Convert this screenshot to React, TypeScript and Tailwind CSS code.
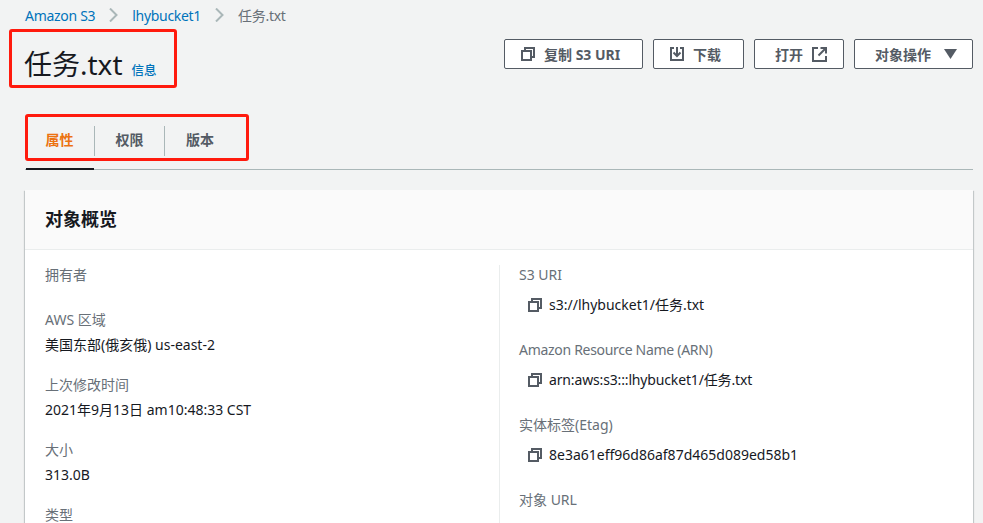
const FONT = "font-['Noto_Sans','Noto_Sans_CJK_SC',sans-serif]";

function CopyIcon({ className = "" }: { className?: string }) {
  return (
    <svg viewBox="0 0 14 14" className={className} fill="none" stroke="currentColor" strokeWidth="2">
      <rect x="1" y="4" width="9" height="9" />
      <path d="M4 4V1h9v9h-3" />
    </svg>
  );
}

function DownloadIcon() {
  return (
    <svg viewBox="0 0 14 14" className="w-[14px] h-[14px]" fill="none" stroke="currentColor" strokeWidth="2">
      <path d="M4 1H1v12h12V1h-3" />
      <path d="M7 0v8" />
      <path d="M3.500 5.500 7 9l3.500-3.500" />
    </svg>
  );
}

function ExternalIcon() {
  return (
    <svg viewBox="0 0 15 15" className="w-[15px] h-[15px]" fill="none" stroke="currentColor" strokeWidth="2">
      <path d="M6 1H1v13h13V9" />
      <path d="M8.500 1H14v5.500" />
      <path d="M14 1 6.500 8.500" />
    </svg>
  );
}

function Chevron() {
  return (
    <svg viewBox="0 0 9 14" className="w-[9px] h-[14px] text-[#aab7b8]" fill="none" stroke="currentColor" strokeWidth="2">
      <path d="M1 0.500l6.500 6.500L1 13.500" />
    </svg>
  );
}

function Button({ width, children }: { width: string; children: React.ReactNode }) {
  return (
    <button className={`${width} h-[30px] flex items-center gap-[9px] bg-white border border-[#545b64] rounded-[2px] text-[14px] font-bold text-[#545b64]`}>
      {children}
    </button>
  );
}

function Field({ label, value }: { label: string; value?: string }) {
  return (
    <div className="mb-[20px]">
      <div className="h-[20px] leading-[20px] text-[#687078]">{label}</div>
      {value ? <div className="mt-[5px] h-[20px] leading-[20px] text-[#16191f]">{value}</div> : <div className="h-[5px]" />}
    </div>
  );
}

function CopyField({ label, value, tight }: { label: string; value?: string; tight?: boolean }) {
  return (
    <div className="mb-[25px]">
      <div className={`h-[20px] leading-[20px] text-[#687078] ${tight ? "tracking-[-0.3px]" : ""}`}>{label}</div>
      {value && (
        <div className="mt-[10px] h-[20px] flex items-center pl-[9px] gap-[7px] text-[#16191f]">
          <CopyIcon className="w-[14px] h-[14px] text-[#545b64]" />
          <span className={`leading-[20px] ${tight ? "tracking-[-0.15px]" : ""}`}>{value}</span>
        </div>
      )}
    </div>
  );
}

export default function App() {
  return (
    <div className={`${FONT} relative w-[983px] h-[523px] overflow-hidden bg-[#f2f3f3] text-[14px]`}>
      <div className="pl-[25px] pr-[10px]">
        {/* breadcrumb */}
        <div className="h-[30px] flex items-center gap-[14px] text-[14px] tracking-[-0.3px]">
          <span className="text-[#0073bb]">Amazon S3</span>
          <Chevron />
          <span className="text-[#0073bb]">lhybucket1</span>
          <Chevron />
          <span className="text-[#687078]">任务.txt</span>
        </div>

        {/* header */}
        <div className="h-[56px] flex items-center justify-between">
          <div className="flex items-baseline gap-[9px] pt-[12px] -ml-[1px]">
            <span className="text-[28px] text-[#16191f] leading-[40px]">任务.txt</span>
            <span className="text-[12.5px] font-medium text-[#0073bb]">信息</span>
          </div>
          <div className="flex gap-[10px] -mt-[8px]">
            <Button width="w-[139px] pl-[16px]">
              <CopyIcon className="w-[14px] h-[14px]" />
              复制 S3 URI
            </Button>
            <Button width="w-[91px] pl-[16px]">
              <DownloadIcon />
              下载
            </Button>
            <Button width="w-[90px] pl-[20px]">
              打开
              <ExternalIcon />
            </Button>
            <Button width="w-[119px] pl-[20px]">
              对象操作
              <svg viewBox="0 0 13 10" className="w-[13px] h-[10px] ml-[4px] fill-current">
                <path d="M0 0h13L6.500 10z" />
              </svg>
            </Button>
          </div>
        </div>

        {/* tabs */}
        <div className="mt-[30px] h-[54px] pb-[4px] flex items-center border-b border-[#aab7b8] font-bold text-[14px] text-[#545b64] relative">
          <div className="w-[70px] h-[30px] pb-[2px] flex items-center justify-center text-[#ec7211] border-r border-[#aab7b8]">属性</div>
          <div className="w-[70px] h-[30px] pb-[2px] flex items-center justify-center border-r border-[#aab7b8]">权限</div>
          <div className="w-[70px] h-[30px] pb-[2px] flex items-center justify-center">版本</div>
          <div className="absolute left-[1px] bottom-[-1px] w-[68px] h-[2px] bg-[#16191f]" />
        </div>

        {/* card */}
        <div className="mt-[20px] bg-white shadow-[0_1px_1px_0_rgba(0,28,36,0.3),1px_1px_1px_0_rgba(0,28,36,0.15),-1px_1px_1px_0_rgba(0,28,36,0.15)]">
          <div className="h-[60px] flex items-center px-[20px] bg-[#fafafa] border-b border-[#eaeded] text-[18px] font-bold text-[#16191f]">
            对象概览
          </div>
          <div className="flex pt-[15px]">
            <div className="w-[474px] pl-[20px]">
              <Field label="拥有者" />
              <Field label="AWS 区域" value="美国东部(俄亥俄) us-east-2" />
              <Field label="上次修改时间" value="2021年9月13日 am10:48:33 CST" />
              <Field label="大小" value="313.0B" />
              <Field label="类型" />
            </div>
            <div className="flex-1 border-l border-[#eaeded] pl-[19px]">
              <CopyField label="S3 URI" value="s3://lhybucket1/任务.txt" />
              <CopyField label="Amazon Resource Name (ARN)" value="arn:aws:s3:::lhybucket1/任务.txt" tight />
              <CopyField label="实体标签(Etag)" value="8e3a61eff96d86af87d465d089ed58b1" />
              <CopyField label="对象 URL" />
            </div>
          </div>
        </div>
      </div>

      {/* red annotation boxes */}
      <div className="absolute left-[9px] top-[29px] w-[168px] h-[59px] border-[3px] border-[#ff1a0d] rounded-[3px]" />
      <div className="absolute left-[25px] top-[114px] w-[224px] h-[47px] border-[3px] border-[#ff1a0d] rounded-[3px]" />
    </div>
  );
}
